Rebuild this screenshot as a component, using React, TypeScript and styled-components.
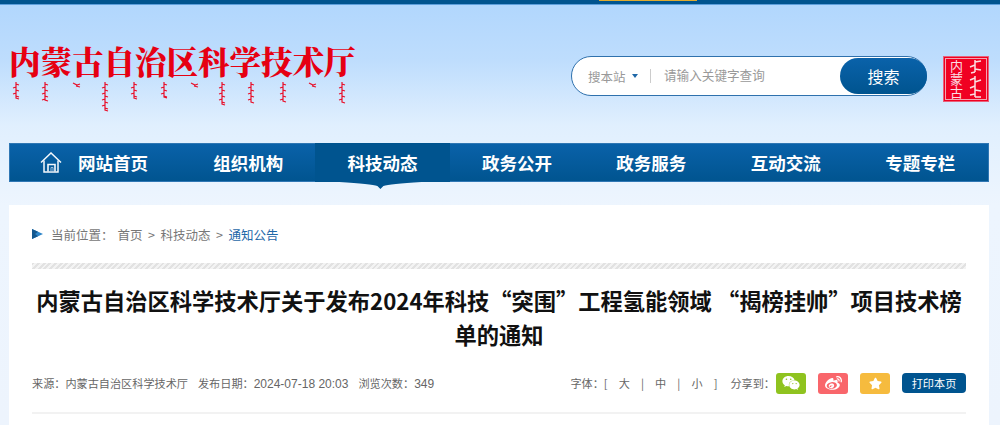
import React from 'react'
import styled, { createGlobalStyle } from 'styled-components'
import { FaWeixin, FaWeibo, FaStar } from 'react-icons/fa'

const navItems = ['组织机构', '科技动态', '政务公开', '政务服务', '互动交流', '专题专栏']

// x, height of each Mongolian word under the logo
const scriptMarks = [
    [7, 16], [36, 18], [67, 5], [96, 28], [125, 16], [155, 15],
    [185, 3], [213, 22], [242, 20], [274, 19], [303, 5], [333, 20],
]

function ScriptLine() {
    return (
        <svg width="345" height="30" viewBox="0 0 345 30" fill="none" stroke="#e8102a" strokeWidth="1.2">
            {scriptMarks.map(([x, h]) => {
                if (h < 8) {
                    return <path key={x} d={`M${x - 3} 1 L${x + 1} 3 L${x + 4} 2 M${x} 4 L${x + 4} 5`} />
                }
                const ticks = []
                for (let y = 2; y < h; y += 3) {
                    ticks.push(`M${x} ${y} L${x + (y % 2 === 0 ? 3 : -3)} ${y + 1}`)
                }
                return <path key={x} d={`M${x} 0 L${x} ${h} L${x + 3} ${h + 1} ${ticks.join(' ')}`} />
            })}
        </svg>
    )
}

export default function App() {
    return (
        <Page>
            <GlobalStyle />
            <TopBar>
                <GoldTab />
            </TopBar>
            <Header>
                <Logo>
                    <LogoTitle>内蒙古自治区科学技术厅</LogoTitle>
                    <ScriptLine />
                </Logo>
                <HeaderRight>
                    <SearchBox>
                        <ScopeSelect>
                            搜本站
                            <Caret />
                        </ScopeSelect>
                        <SearchInput placeholder="请输入关键字查询" />
                        <SearchButton>搜索</SearchButton>
                    </SearchBox>
                    <Seal>
                        <SealText>内蒙古</SealText>
                        <svg width="15" height="38" viewBox="0 0 15 38" fill="none" stroke="#fbdde2" strokeWidth="1.5">
                            <path d="M7 0 L7 12 M7 2 L13 1 M7 5 L2 7 M7 9 L13 10 M7 12 L3 13" />
                            <path d="M7 16 L7 37 M7 18 L2 20 M7 22 L13 20 M7 26 L2 28 M7 30 L13 31 M7 34 L2 35 M7 37 L13 37" />
                        </svg>
                    </Seal>
                </HeaderRight>
            </Header>
            <Nav>
                <HomeItem>
                    <svg width="22" height="21" viewBox="0 0 22 21" fill="none" stroke="#f4f8fc" strokeWidth="1.5">
                        <path d="M1 10.5 L11 1 L21 10.5" />
                        <path d="M4 8.5 L4 20 L18 20 L18 8.5" />
                        <path d="M8 19.5 L8 12.5 L15 12.5 L15 19.5" strokeWidth="1.6" />
                        <path d="M11 19.5 L11 15.5 L13 15.5 L13 19.5" strokeWidth="1" stroke="#9cc0de" />
                    </svg>
                    网站首页
                </HomeItem>
                {navItems.map(item => (
                    <NavItem key={item} $active={item === '科技动态'}>
                        {item}
                    </NavItem>
                ))}
            </Nav>
            <Card>
                <Breadcrumb>
                    <svg width="11" height="10" viewBox="0 0 11 10">
                        <path d="M0 0 L11 5 L0 10 Z" fill="#2f86c9" />
                        <path d="M0 0 L6 2.7 L3 5 L6 7.3 L0 10 Z" fill="#14588f" />
                    </svg>
                    <CrumbLabel>当前位置：</CrumbLabel>
                    <CrumbLinks>
                        <span>首页</span>
                        <span>&gt;</span>
                        <span>科技动态</span>
                        <span>&gt;</span>
                        <em>通知公告</em>
                    </CrumbLinks>
                </Breadcrumb>
                <StripedRule />
                <ArticleTitle>内蒙古自治区科学技术厅关于发布2024年科技“突围”工程氢能领域 “揭榜挂帅”项目技术榜单的通知</ArticleTitle>
                <MetaRow>
                    <MetaLeft>
                        <span>来源：内蒙古自治区科学技术厅</span>
                        <span>
                            发布日期：<MetaNumber>2024-07-18 20:03</MetaNumber>
                        </span>
                        <span>
                            浏览次数：<MetaNumber>349</MetaNumber>
                        </span>
                    </MetaLeft>
                    <MetaRight>
                        <FontSizes>
                            <span>字体：[</span>
                            <span>大</span>
                            <span>|</span>
                            <span>中</span>
                            <span>|</span>
                            <span>小</span>
                            <span>]</span>
                        </FontSizes>
                        <ShareLabel>分享到：</ShareLabel>
                        <ShareButton $color="#8fc31f">
                            <FaWeixin size={18} />
                        </ShareButton>
                        <ShareButton $color="#f9666b">
                            <FaWeibo size={17} />
                        </ShareButton>
                        <ShareButton $color="#f6bb3e">
                            <FaStar size={13} />
                        </ShareButton>
                        <PrintButton>打印本页</PrintButton>
                    </MetaRight>
                </MetaRow>
                <MetaRule />
            </Card>
        </Page>
    )
}

const GlobalStyle = createGlobalStyle`
    html, body {
        margin: 0;
        padding: 0;
    }
    * {
        box-sizing: border-box;
    }
`

const Page = styled.div`
    height: 425px;
    overflow: hidden;
    font-family: 'Noto Sans CJK SC', 'Liberation Sans', sans-serif;
    background: linear-gradient(180deg, #b0d6fd 0%, #bedDfd 60px, #e0effe 125px, #edf5fe 205px, #edf4fd 100%);
`

const TopBar = styled.div`
    height: 5px;
    padding-left: 599px;
    background: #00548f;
    border-bottom: 1px solid #5d9fdc;
`

const GoldTab = styled.div`
    width: 98px;
    height: 1px;
    background: #e0ab2e;
`

const Header = styled.header`
    height: 138px;
    padding: 37px 11px 0 9px;
    display: flex;
    justify-content: space-between;
    align-items: flex-start;
`

const Logo = styled.div`
    width: 346px;
    display: flex;
    flex-direction: column;
    gap: 2px;
`

const LogoTitle = styled.h1`
    margin: 0;
    font-family: 'Noto Serif CJK SC', 'Noto Sans CJK SC', serif;
    font-size: 31.5px;
    line-height: 38px;
    font-weight: 900;
    color: #e60012;
    white-space: nowrap;
`

const HeaderRight = styled.div`
    display: flex;
    gap: 16px;
    margin-top: 14px;
`

const SearchBox = styled.div`
    width: 356px;
    height: 40px;
    padding-left: 1px;
    display: flex;
    align-items: center;
    border: 1px solid #2f71ad;
    border-radius: 20px;
    background: #fff;
`

const ScopeSelect = styled.div`
    width: 78px;
    height: 14px;
    padding-left: 15px;
    display: flex;
    align-items: center;
    gap: 6px;
    font-size: 12.5px;
    color: #999;
    border-right: 1px solid #ccc;
    white-space: nowrap;
`

const Caret = styled.i`
    width: 0;
    height: 0;
    border-style: solid;
    border-width: 4px 3.5px 0;
    border-color: #1f68a8 transparent transparent;
`

const SearchInput = styled.input`
    flex: 1;
    min-width: 0;
    padding: 0 0 4px 13px;
    border: 0;
    outline: 0;
    background: transparent;
    font-family: inherit;
    font-size: 12.6px;
    &::placeholder {
        color: #999;
        opacity: 1;
    }
`

const SearchButton = styled.button`
    width: 87px;
    height: 36px;
    margin-right: -1px;
    padding: 0;
    border: 0;
    border-radius: 18px;
    background: linear-gradient(180deg, #0a62aa 0%, #00548f 100%);
    color: #fff;
    font-family: inherit;
    font-size: 16px;
`

const Seal = styled.div`
    width: 46px;
    height: 46px;
    display: flex;
    align-items: center;
    justify-content: center;
    gap: 4px;
    border: 1px solid #e9607a;
    outline: 1px solid #f3a3b0;
    outline-offset: -3px;
    background: #f00022;
`

const SealText = styled.span`
    writing-mode: vertical-rl;
    font-size: 13px;
    line-height: 15px;
    color: #fbdde2;
`

const Nav = styled.nav`
    width: 980px;
    height: 39px;
    margin-left: 9px;
    display: grid;
    grid-template-columns: 172px repeat(6, 134.4px);
    background: linear-gradient(180deg, #0a62aa 0%, #00548f 100%);
    box-shadow: inset 0 0 0 1px #2f77b4;
    color: #fff;
    font-size: 17.5px;
    font-weight: 700;
`

const NavItem = styled.a<{ $active?: boolean }>`
    position: relative;
    display: flex;
    align-items: center;
    justify-content: center;
    background: ${p => (p.$active ? '#00548f' : 'transparent')};

    &::after {
        content: ${p => (p.$active ? "''" : 'none')};
        position: absolute;
        left: 24px;
        right: 28px;
        top: 100%;
        height: 7px;
        background: #00548f;
        clip-path: path('M0 0 L82 0 Q50 2 44 4 L41 7 L38 4 Q32 2 0 0 Z');
    }
`

const HomeItem = styled(NavItem)`
    justify-content: flex-start;
    padding-left: 31px;
    gap: 16px;
`

const Card = styled.main`
    width: 980px;
    height: 300px;
    margin: 23px 0 0 9px;
    padding: 0 23px;
    background: #fff;
`

const Breadcrumb = styled.div`
    height: 58px;
    display: flex;
    align-items: center;
    font-size: 12.5px;
    color: #777;
`

const CrumbLabel = styled.span`
    margin-left: 8px;
`

const CrumbLinks = styled.span`
    margin-left: 4px;
    display: flex;
    gap: 5.5px;
    em {
        font-style: normal;
        color: #1f68a8;
    }
`

const StripedRule = styled.div`
    height: 6px;
    background: repeating-linear-gradient(135deg, #e2e2e2 0 2px, #f3f3f3 2px 4px);
`

const ArticleTitle = styled.h2`
    margin: 14px 0 0;
    font-size: 22.25px;
    line-height: 34px;
    font-weight: 700;
    text-align: center;
    color: #111;
`

const MetaRow = styled.div`
    height: 20px;
    margin-top: 22px;
    display: flex;
    justify-content: space-between;
    align-items: center;
    font-size: 11.15px;
    color: #666;
`

const MetaNumber = styled.span`
    font-family: 'Liberation Sans', sans-serif;
    font-size: 12px;
`

const MetaLeft = styled.div`
    display: flex;
    gap: 10px;
`

const MetaRight = styled.div`
    display: flex;
    align-items: center;
`

const FontSizes = styled.div`
    width: 147px;
    display: flex;
    justify-content: space-between;
`

const ShareLabel = styled.span`
    margin: 0 1px 0 13px;
`

const ShareButton = styled.a<{ $color: string }>`
    width: 30px;
    height: 21px;
    margin-right: 12px;
    display: flex;
    align-items: center;
    justify-content: center;
    border-radius: 3px;
    background: ${p => p.$color};
    color: #fff;
`

const PrintButton = styled.a`
    width: 64px;
    height: 20px;
    display: flex;
    align-items: center;
    justify-content: center;
    border-radius: 4px;
    background: #00548f;
    color: #fff;
`

const MetaRule = styled.div`
    height: 2px;
    margin-top: 19px;
    background: #f2f2f2;
`
